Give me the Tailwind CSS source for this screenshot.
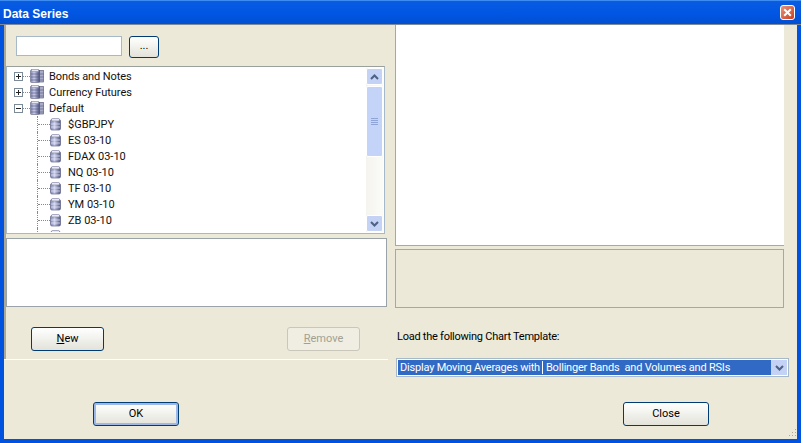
<!DOCTYPE html>
<html><head><meta charset="utf-8"><script src="https://cdn.jsdelivr.net/npm/@tailwindcss/browser@4"></script></head>
<body class="m-0 bg-white">
<svg width="0" height="0" class="absolute">
<defs>
<linearGradient id="cyl" x1="0" x2="1" y1="0" y2="0"><stop offset="0" stop-color="#7f84ad"/><stop offset=".4" stop-color="#c9cceb"/><stop offset="1" stop-color="#50557f"/></linearGradient>
<symbol id="db" viewBox="0 0 11 13"><rect x=".5" y="1.5" width="10" height="10.5" rx="1.5" fill="url(#cyl)" stroke="#60648a" stroke-width=".7"/><rect x="1.5" y=".5" width="8" height="2.5" rx="1" fill="#e8e9f4" stroke="#777b9c" stroke-width=".6"/><path d="M1 6h9M1 9h9" stroke="#eef0fa" stroke-width=".7"/></symbol>
<symbol id="dbs" viewBox="0 0 14 14"><rect x=".5" y="1" width="9" height="12.5" rx="1" fill="url(#cyl)" stroke="#6f7390" stroke-width=".7"/><rect x="1.5" y=".5" width="7" height="2" fill="#e6e7f2" stroke="#80839f" stroke-width=".5"/><rect x="9.5" y="1.5" width="4" height="11.5" fill="#a9acc8" stroke="#5c6080" stroke-width=".7"/><path d="M1 5h12.5M1 8h12.5M1 11h12.5M9.5 1v12" stroke="#50547a" stroke-width=".6"/></symbol>
</defs>
</svg>
<div class="w-[801px] h-[443px] flex flex-col font-['Roboto',sans-serif] text-[11px] text-black overflow-hidden">
  <div class="h-[25px] shrink-0 flex items-center justify-between pl-[3px] pr-[6px] bg-gradient-to-b from-[#0a5ce0] via-[#0156e4] to-[#0250d2] border-t border-[#3d8cf2] border-b-[#7f8a96] border-b">
    <span class="font-['Liberation_Sans',sans-serif] font-bold text-white text-[12px] leading-none pt-[3px]">Data Series</span>
    <div class="w-[15px] h-[15px] rounded-[3px] border border-white bg-gradient-to-br from-[#e8917a] to-[#c83c18] flex items-center justify-center">
      <svg width="9" height="9" viewBox="0 0 9 9"><path d="M1.2 1.2l6.6 6.6M7.8 1.2L1.2 7.8" stroke="#fff" stroke-width="2"/></svg>
    </div>
  </div>
  <div class="flex-1 min-h-0 flex flex-col bg-[#ece9d8] border-l-4 border-r-4 border-b-4 border-[#0252e0]">
    <div class="flex h-[352px] shrink-0">
      <div class="w-[384px] shrink-0 flex flex-col">
        <div class="h-[334px] shrink-0 flex flex-col border-l-2 border-[#aca899]">
          <div class="h-[41px] shrink-0 flex items-start gap-[7px] pl-[10px] pt-[11px]">
            <div class="w-[106px] h-[20px] bg-white border border-[#a5b9c9]"></div>
            <div class="w-[30px] h-[22px] rounded-[3px] border border-[#003c74] bg-gradient-to-b from-white to-[#e3e3da] flex items-center justify-center pb-[1px]">...</div>
          </div>
          <div class="w-[379px] h-[168px] shrink-0 bg-white border border-[#a5b9c9] border-t-[#9aa09a] flex p-[1px] overflow-hidden">
            <div class="flex-1 min-w-0 h-full overflow-hidden text-[#111]">
              <div class="h-4 flex items-center pl-[6px]">
                <div class="w-[9px] h-[9px] border border-[#7b8a99] bg-white flex items-center justify-center"><svg width="7" height="7" viewBox="0 0 7 7"><path d="M1 3.5h5M3.5 1v5" stroke="#222"/></svg></div>
                <div class="w-[7px] border-t border-dotted border-[#888]"></div>
                <svg width="14" height="14" class="shrink-0"><use href="#dbs"/></svg>
                <span class="ml-[5px] pt-[2px] tracking-[-0.1px]">Bonds and Notes</span>
              </div>
              <div class="h-4 flex items-center pl-[6px]">
                <div class="w-[9px] h-[9px] border border-[#7b8a99] bg-white flex items-center justify-center"><svg width="7" height="7" viewBox="0 0 7 7"><path d="M1 3.5h5M3.5 1v5" stroke="#222"/></svg></div>
                <div class="w-[7px] border-t border-dotted border-[#888]"></div>
                <svg width="14" height="14" class="shrink-0"><use href="#dbs"/></svg>
                <span class="ml-[5px] pt-[2px]">Currency Futures</span>
              </div>
              <div class="h-4 flex items-center pl-[6px]">
                <div class="w-[9px] h-[9px] border border-[#7b8a99] bg-white flex items-center justify-center"><svg width="7" height="7" viewBox="0 0 7 7"><path d="M1 3.5h5" stroke="#222"/></svg></div>
                <div class="w-[7px] border-t border-dotted border-[#888]"></div>
                <svg width="14" height="14" class="shrink-0"><use href="#dbs"/></svg>
                <span class="ml-[5px] pt-[2px]">Default</span>
              </div>
              <div class="h-4 flex items-center pl-[29px]"><div class="h-full border-l border-dotted border-[#888]"></div><div class="w-[12px] border-t border-dotted border-[#888]"></div><svg width="11" height="13" class="shrink-0"><use href="#db"/></svg><span class="ml-[7px] pt-[2px]">$GBPJPY</span></div>
              <div class="h-4 flex items-center pl-[29px]"><div class="h-full border-l border-dotted border-[#888]"></div><div class="w-[12px] border-t border-dotted border-[#888]"></div><svg width="11" height="13" class="shrink-0"><use href="#db"/></svg><span class="ml-[7px] pt-[2px]">ES 03-10</span></div>
              <div class="h-4 flex items-center pl-[29px]"><div class="h-full border-l border-dotted border-[#888]"></div><div class="w-[12px] border-t border-dotted border-[#888]"></div><svg width="11" height="13" class="shrink-0"><use href="#db"/></svg><span class="ml-[7px] pt-[2px]">FDAX 03-10</span></div>
              <div class="h-4 flex items-center pl-[29px]"><div class="h-full border-l border-dotted border-[#888]"></div><div class="w-[12px] border-t border-dotted border-[#888]"></div><svg width="11" height="13" class="shrink-0"><use href="#db"/></svg><span class="ml-[7px] pt-[2px]">NQ 03-10</span></div>
              <div class="h-4 flex items-center pl-[29px]"><div class="h-full border-l border-dotted border-[#888]"></div><div class="w-[12px] border-t border-dotted border-[#888]"></div><svg width="11" height="13" class="shrink-0"><use href="#db"/></svg><span class="ml-[7px] pt-[2px]">TF 03-10</span></div>
              <div class="h-4 flex items-center pl-[29px]"><div class="h-full border-l border-dotted border-[#888]"></div><div class="w-[12px] border-t border-dotted border-[#888]"></div><svg width="11" height="13" class="shrink-0"><use href="#db"/></svg><span class="ml-[7px] pt-[2px]">YM 03-10</span></div>
              <div class="h-4 flex items-center pl-[29px]"><div class="h-full border-l border-dotted border-[#888]"></div><div class="w-[12px] border-t border-dotted border-[#888]"></div><svg width="11" height="13" class="shrink-0"><use href="#db"/></svg><span class="ml-[7px] pt-[2px]">ZB 03-10</span></div>
              <div class="h-4 flex items-center pl-[29px]"><div class="h-full border-l border-dotted border-[#888]"></div><div class="w-[12px] border-t border-dotted border-[#888]"></div><svg width="11" height="13" class="shrink-0"><use href="#db"/></svg><span class="ml-[7px] pt-[2px]">ZN 03-10</span></div>
            </div>
            <div class="w-[17px] h-full shrink-0 flex flex-col bg-gradient-to-r from-[#f5f4ee] to-[#fbfbf8]">
              <div class="h-[17px] shrink-0 rounded-[2px] border border-white bg-[#c3d2f5] flex items-center justify-center"><svg width="9" height="6" viewBox="0 0 9 6"><path d="M1 5l3.5-3.5L8 5" fill="none" stroke="#4d6185" stroke-width="2"/></svg></div>
              <div class="h-[71px] shrink-0 rounded-[2px] border border-white bg-[#c4d3f8] mt-[1px] flex items-center justify-center"><svg width="7" height="8" viewBox="0 0 7 8"><path d="M0 .5h7M0 2.5h7M0 4.5h7M0 6.5h7" stroke="#8fa5d8"/></svg></div>
              <div class="flex-1"></div>
              <div class="h-[17px] shrink-0 rounded-[2px] border border-white bg-[#c3d2f5] flex items-center justify-center"><svg width="9" height="6" viewBox="0 0 9 6"><path d="M1 1l3.5 3.5L8 1" fill="none" stroke="#4d6185" stroke-width="2"/></svg></div>
            </div>
          </div>
          <div class="mt-[4px] w-[381px] h-[69px] shrink-0 bg-white border border-[#9aa4a8]"></div>
          <div class="mt-[20px] pl-[25px] pr-[28px] flex justify-between">
            <div class="w-[73px] h-[24px] rounded-[3px] border border-[#003c74] bg-gradient-to-b from-white to-[#e3e3da] flex items-center justify-center"><span><span class="underline">N</span>ew</span></div>
            <div class="w-[73px] h-[24px] rounded-[3px] border border-[#c9c7ba] bg-[#f0eee2] flex items-center justify-center text-[#a1a192]"><span><span class="underline">R</span>emove</span></div>
          </div>
        </div>
        <div class="border-t border-white"></div>
      </div>
      <div class="flex-1 min-w-0 pl-[7px] flex flex-col">
        <div class="w-[389px] h-[221px] shrink-0 bg-white border-b border-l border-[#aca899]"></div>
        <div class="w-[389px] h-[59px] shrink-0 mt-[3px] border border-[#aca899]"></div>
        <div class="mt-[22px] pl-[2px] leading-[14px] tracking-[-0.25px]">Load the following Chart Template:</div>
        <div class="mt-[14px] ml-[1px] w-[393px] h-[19px] shrink-0 bg-white border border-[#a5b9c9] flex p-[1px]">
          <div class="flex-1 min-w-0 bg-[#316ac5] text-white leading-[15px] pl-[2px] whitespace-pre tracking-[-0.2px]"><span class="pr-[2px] border-r border-white">Display Moving Averages with</span><span class="pl-[3px]">Bollinger Bands  and Volumes and RSIs</span></div>
          <div class="w-[16px] shrink-0 bg-[#c3d2f5] flex items-center justify-center"><svg width="9" height="6" viewBox="0 0 9 6"><path d="M1 1l3.5 3.5L8 1" fill="none" stroke="#4d6185" stroke-width="2"/></svg></div>
        </div>
      </div>
    </div>
    <div class="flex justify-between pl-[89px] pr-[88px] pt-[25px] relative flex-1">
      <div class="w-[86px] h-[24px] rounded-[3px] border border-[#003c74] bg-gradient-to-b from-white to-[#e3e3da] shadow-[inset_0_0_0_2px_#9db8e6] flex items-center justify-center">OK</div>
      <div class="w-[86px] h-[24px] rounded-[3px] border border-[#003c74] bg-gradient-to-b from-white to-[#e3e3da] flex items-center justify-center">Close</div>
      <svg width="11" height="11" viewBox="0 0 11 11" class="absolute right-0 bottom-0"><path d="M9 1h1v1H9zM6 4h1v1H6zM9 4h1v1H9zM3 7h1v1H3zM6 7h1v1H6zM9 7h1v1H9z" fill="#aca899"/></svg>
    </div>
  </div>
</div>
</body></html>
